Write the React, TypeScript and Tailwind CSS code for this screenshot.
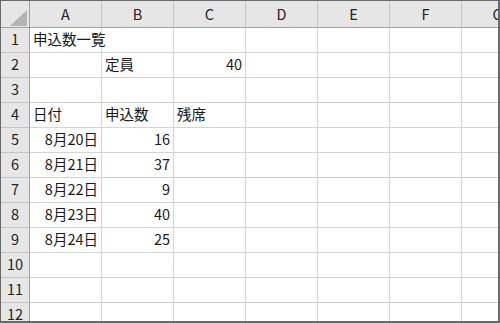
import React from "react";

const cols = ["A", "B", "C", "D", "E", "F", "G"];

type Cell = { t: string; r?: boolean };
const data: Record<number, Record<number, Cell>> = {
  1: { 0: { t: "申込数一覧" } },
  2: { 1: { t: "定員" }, 2: { t: "40", r: true } },
  4: { 0: { t: "日付" }, 1: { t: "申込数" }, 2: { t: "残席" } },
  5: { 0: { t: "8月20日", r: true }, 1: { t: "16", r: true } },
  6: { 0: { t: "8月21日", r: true }, 1: { t: "37", r: true } },
  7: { 0: { t: "8月22日", r: true }, 1: { t: "9", r: true } },
  8: { 0: { t: "8月23日", r: true }, 1: { t: "40", r: true } },
  9: { 0: { t: "8月24日", r: true }, 1: { t: "25", r: true } },
};

export default function App() {
  const rows = Array.from({ length: 12 }, (_, i) => i + 1);
  return (
    <div
      className="w-[500px] h-[323px] bg-white overflow-hidden border-l border-t border-r-2 border-b-2 border-[#6a6a6a] text-[14.5px] text-[#1a1a1a]"
      style={{ fontFamily: '"Noto Sans CJK JP", "Noto Sans", sans-serif' }}
    >
      <div className="grid grid-cols-[29px_repeat(6,72px)_72px] auto-rows-[25px] grid-rows-[27px]">
        <div className="relative bg-[#e6e6e6] border-r border-b border-[#a0a0a0] h-[27px]">
          <svg className="absolute left-[9px] top-[9px]" width="17" height="16" viewBox="0 0 17 16">
            <polygon points="17,0 17,16 0,16" fill="#b4b4b4" />
          </svg>
        </div>
        {cols.map((c) => (
          <div
            key={c}
            className="h-[27px] bg-[#e6e6e6] border-b border-b-[#a0a0a0] border-r border-r-[#c4c4c4] flex items-center justify-center leading-none pt-[1px] text-[#222]"
          >
            {c}
          </div>
        ))}
        {rows.map((r) => (
          <React.Fragment key={r}>
            <div className="bg-[#e6e6e6] border-r border-r-[#a0a0a0] border-b border-b-[#c4c4c4] flex items-center justify-center leading-none pb-[1px] text-[#222]">
              {r}
            </div>
            {cols.map((c, ci) => {
              const cell = data[r]?.[ci];
              return (
                <div
                  key={c}
                  className={`border-r border-b border-[#d4d4d4] flex items-center whitespace-nowrap leading-none pb-[1px] ${
                    cell?.r ? "justify-end pr-[3px]" : "justify-start pl-[3px]"
                  }`}
                >
                  {cell ? <span>{cell.t}</span> : null}
                </div>
              );
            })}
          </React.Fragment>
        ))}
      </div>
    </div>
  );
}
